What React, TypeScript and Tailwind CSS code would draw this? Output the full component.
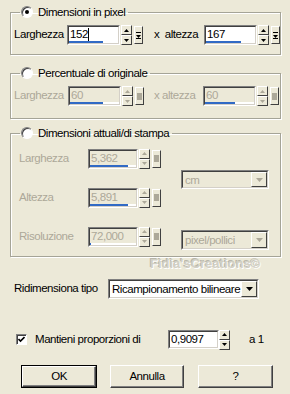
import React from "react";

const sunken =
  "border border-t-[#808080] border-l-[#808080] border-b-white border-r-white";
const sunkenInner =
  "border border-t-[#404040] border-l-[#404040] border-b-[#d4d0c8] border-r-[#d4d0c8]";
const raised =
  "border border-t-white border-l-white border-b-[#404040] border-r-[#404040] bg-[#ECE9D8]";

function Tri({ up, disabled }: { up?: boolean; disabled?: boolean }) {
  return (
    <svg width="5" height="3" viewBox="0 0 5 3" className="block">
      <polygon
        points={up ? "0,3 5,3 2.5,0" : "0,0 5,0 2.5,3"}
        fill={disabled ? "#ACA899" : "#000"}
      />
    </svg>
  );
}

function Spinner({ disabled }: { disabled?: boolean }) {
  return (
    <div className="flex flex-col w-[11px] h-[20px] shrink-0">
      <div className={`${raised} flex-1 flex items-center justify-center`}>
        <Tri up disabled={disabled} />
      </div>
      <div className={`${raised} flex-1 flex items-center justify-center`}>
        <Tri disabled={disabled} />
      </div>
    </div>
  );
}

function MiniBox({ disabled }: { disabled?: boolean }) {
  return (
    <div
      className={`${raised} w-[9px] h-[18px] flex items-center justify-center shrink-0`}
    >
      {disabled ? (
        <div className="w-[5px] h-[7px] bg-[#ACA899]" />
      ) : (
        <svg width="5" height="7" viewBox="0 0 5 7" className="block">
          <rect x="0" y="0" width="5" height="1" fill="#000" />
          <polygon points="0,3 5,3 2.5,6" fill="#000" />
          <rect x="0" y="6" width="5" height="1" fill="#000" />
        </svg>
      )}
    </div>
  );
}

function NumField({
  value,
  w,
  bar,
  disabled,
  caret,
}: {
  value: string;
  w: string;
  bar: string;
  disabled?: boolean;
  caret?: boolean;
}) {
  return (
    <div className={`${sunken} ${w} h-[20px] shrink-0`}>
      <div
        className={`${sunkenInner} h-full flex flex-col ${
          disabled ? "bg-[#ECE9D8]" : "bg-white"
        }`}
      >
        <div
          className={`flex-1 pl-[1px] leading-[14px] flex items-start ${
            disabled ? "text-[#ACA899]" : "text-black"
          }`}
        >
          <span>{value}</span>
          {caret && <span className="w-[1px] h-[13px] bg-black mt-[1px]" />}
        </div>
        <div className="h-[3px] flex bg-white">
          <div className={`${bar} h-full bg-[#316AC5]`} />
        </div>
      </div>
    </div>
  );
}

function Spin({
  value,
  w,
  bar,
  disabled,
  caret,
}: {
  value: string;
  w: string;
  bar: string;
  disabled?: boolean;
  caret?: boolean;
}) {
  return (
    <div className="flex items-center shrink-0">
      <NumField value={value} w={w} bar={bar} disabled={disabled} caret={caret} />
      <div className="ml-[1px]">
        <Spinner disabled={disabled} />
      </div>
      <div className="ml-[2px]">
        <MiniBox disabled={disabled} />
      </div>
    </div>
  );
}

function Radio({ checked }: { checked?: boolean }) {
  return (
    <div className="w-[12px] h-[12px] shrink-0 rounded-full border border-t-[#808080] border-l-[#808080] border-b-white border-r-white bg-white flex items-center justify-center shadow-[inset_1px_1px_0_#404040]">
      {checked && <div className="w-[4px] h-[4px] rounded-full bg-black" />}
    </div>
  );
}

function Combo({
  text,
  w,
  h,
  disabled,
}: {
  text: string;
  w: string;
  h: string;
  disabled?: boolean;
}) {
  return (
    <div className={`${sunken} ${w} ${h} shrink-0`}>
      <div
        className={`${sunkenInner} h-full flex items-stretch ${
          disabled ? "bg-[#ECE9D8]" : "bg-white"
        }`}
      >
        <div
          className={`flex-1 pl-[2px] leading-[16px] whitespace-nowrap overflow-hidden ${
            disabled ? "text-[#ACA899]" : "text-black"
          }`}
        >
          {text}
        </div>
        <div className={`${raised} w-[16px] flex items-center justify-center`}>
          <svg width="7" height="4" viewBox="0 0 7 4" className="block">
            <polygon
              points="0,0 7,0 3.5,4"
              fill={disabled ? "#ACA899" : "#000"}
            />
          </svg>
        </div>
      </div>
    </div>
  );
}

function Button({
  label,
  w,
  def,
}: {
  label: string;
  w: string;
  def?: boolean;
}) {
  return (
    <div className={`${w} h-[23px] ${def ? "border border-black" : ""}`}>
      <div
        className={`h-full border border-t-white border-l-white border-b-[#404040] border-r-[#404040] bg-[#ECE9D8] shadow-[inset_-1px_-1px_0_#808080] flex items-center justify-center text-black`}
      >
        {label}
      </div>
    </div>
  );
}

const group =
  "border border-[#a5a497] shadow-[inset_1px_1px_0_#fff,1px_1px_0_#fff] mx-[10px] w-[271px] min-w-0";

export default function App() {
  return (
    <div className="relative w-[290px] h-[394px] bg-[#ECE9D8] overflow-hidden whitespace-nowrap font-['Liberation_Sans',Arial,sans-serif] text-[11.5px] tracking-[-0.45px] text-black">
      {/* Group 1 */}
      <fieldset className={`${group} mt-[5px] pt-[6px] pb-[9px]`}>
        <legend className="ml-[9px] pl-[1px] pr-[3px] h-[14px] flex items-center gap-[5px] leading-[14px]">
          <Radio checked />
          <span>Dimensioni in pixel</span>
        </legend>
        <div className="flex items-center">
          <span className="ml-[3px] w-[53px] shrink-0">Larghezza</span>
          <Spin value="152" w="w-[53px]" bar="w-[70%]" caret />
          <span className="ml-[11px] w-[50px] shrink-0">x&nbsp; altezza</span>
          <Spin value="167" w="w-[53px]" bar="w-[72%]" />
        </div>
      </fieldset>

      {/* Group 2 */}
      <fieldset className={`${group} mt-[11px] pt-[6px] pb-[12px]`}>
        <legend className="ml-[9px] pl-[1px] pr-[3px] h-[14px] flex items-center gap-[5px] leading-[14px]">
          <Radio />
          <span>Percentuale di originale</span>
        </legend>
        <div className="flex items-center text-[#ACA899]">
          <span className="ml-[3px] w-[54px] shrink-0">Larghezza</span>
          <Spin value="60" w="w-[53px]" bar="w-[67%]" disabled />
          <span className="ml-[10px] w-[49px] shrink-0">x altezza</span>
          <Spin value="60" w="w-[53px]" bar="w-[62%]" disabled />
        </div>
      </fieldset>

      {/* Group 3 */}
      <fieldset className={`${group} mt-[7px] pt-[8px] pb-[6px]`}>
        <legend className="ml-[9px] pl-[1px] pr-[3px] h-[14px] flex items-center gap-[5px] leading-[14px]">
          <Radio />
          <span>Dimensioni attuali/di stampa</span>
        </legend>
        <div className="flex items-start">
          <div className="flex flex-col gap-[18px] text-[#ACA899]">
            <div className="flex items-center h-[21px]">
              <span className="ml-[8px] w-[69px] shrink-0">Larghezza</span>
              <Spin value="5,362" w="w-[50px]" bar="w-[82%]" disabled />
            </div>
            <div className="flex items-center h-[21px]">
              <span className="ml-[8px] w-[69px] shrink-0">Altezza</span>
              <Spin value="5,891" w="w-[50px]" bar="w-[82%]" disabled />
            </div>
            <div className="flex items-center h-[21px]">
              <span className="ml-[8px] w-[69px] shrink-0">Risoluzione</span>
              <Spin value="72,000" w="w-[50px]" bar="w-[2%]" disabled />
            </div>
          </div>
          <div className="ml-[20px] flex flex-col">
            <div className="mt-[22px]">
              <Combo text="cm" w="w-[88px]" h="h-[19px]" disabled />
            </div>
            <div className="mt-[41px]">
              <Combo text="pixel/pollici" w="w-[88px]" h="h-[20px]" disabled />
            </div>
          </div>
        </div>
      </fieldset>

      {/* Ridimensiona tipo */}
      <div className="flex items-center mt-[22px] pl-[14px]">
        <span className="w-[94px] shrink-0">Ridimensiona tipo</span>
        <Combo text="Ricampionamento bilineare" w="w-[151px]" h="h-[20px]" />
      </div>

      {/* Mantieni proporzioni */}
      <div className="flex items-center mt-[31px] pl-[16px] h-[19px]">
        <div className="w-[11px] h-[11px] shrink-0 border border-t-[#808080] border-l-[#808080] border-b-white border-r-white bg-white shadow-[inset_1px_1px_0_#404040] flex items-center justify-center">
          <svg width="7" height="7" viewBox="0 0 7 7" className="block">
            <path d="M0.5 3 L2.5 5 L6.5 1" stroke="#000" strokeWidth="1.6" fill="none" />
          </svg>
        </div>
        <span className="ml-[8px] w-[133px] shrink-0">Mantieni proporzioni di</span>
        <div className="flex items-center shrink-0">
          <div className={`${sunken} w-[51px] h-[19px]`}>
            <div className={`${sunkenInner} h-full bg-white pl-[1px] leading-[15px]`}>
              0,9097
            </div>
          </div>
          <Spinner />
        </div>
        <span className="ml-[19px]">a 1</span>
      </div>

      {/* Buttons */}
      <div className="flex mt-[16px] pl-[21px]">
        <Button label="OK" w="w-[76px]" def />
        <div className="ml-[13px]">
          <Button label="Annulla" w="w-[74px]" />
        </div>
        <div className="ml-[14px]">
          <Button label="?" w="w-[75px]" />
        </div>
      </div>

      {/* Watermark */}
      <div className="absolute left-[150px] top-[254px] text-[13px] font-bold tracking-[0px] text-[#d2d0c5] [text-shadow:1px_1px_0_#fff,-1px_-1px_0_#b9b7ab]">
        Fidia'sCreations©
      </div>
    </div>
  );
}
